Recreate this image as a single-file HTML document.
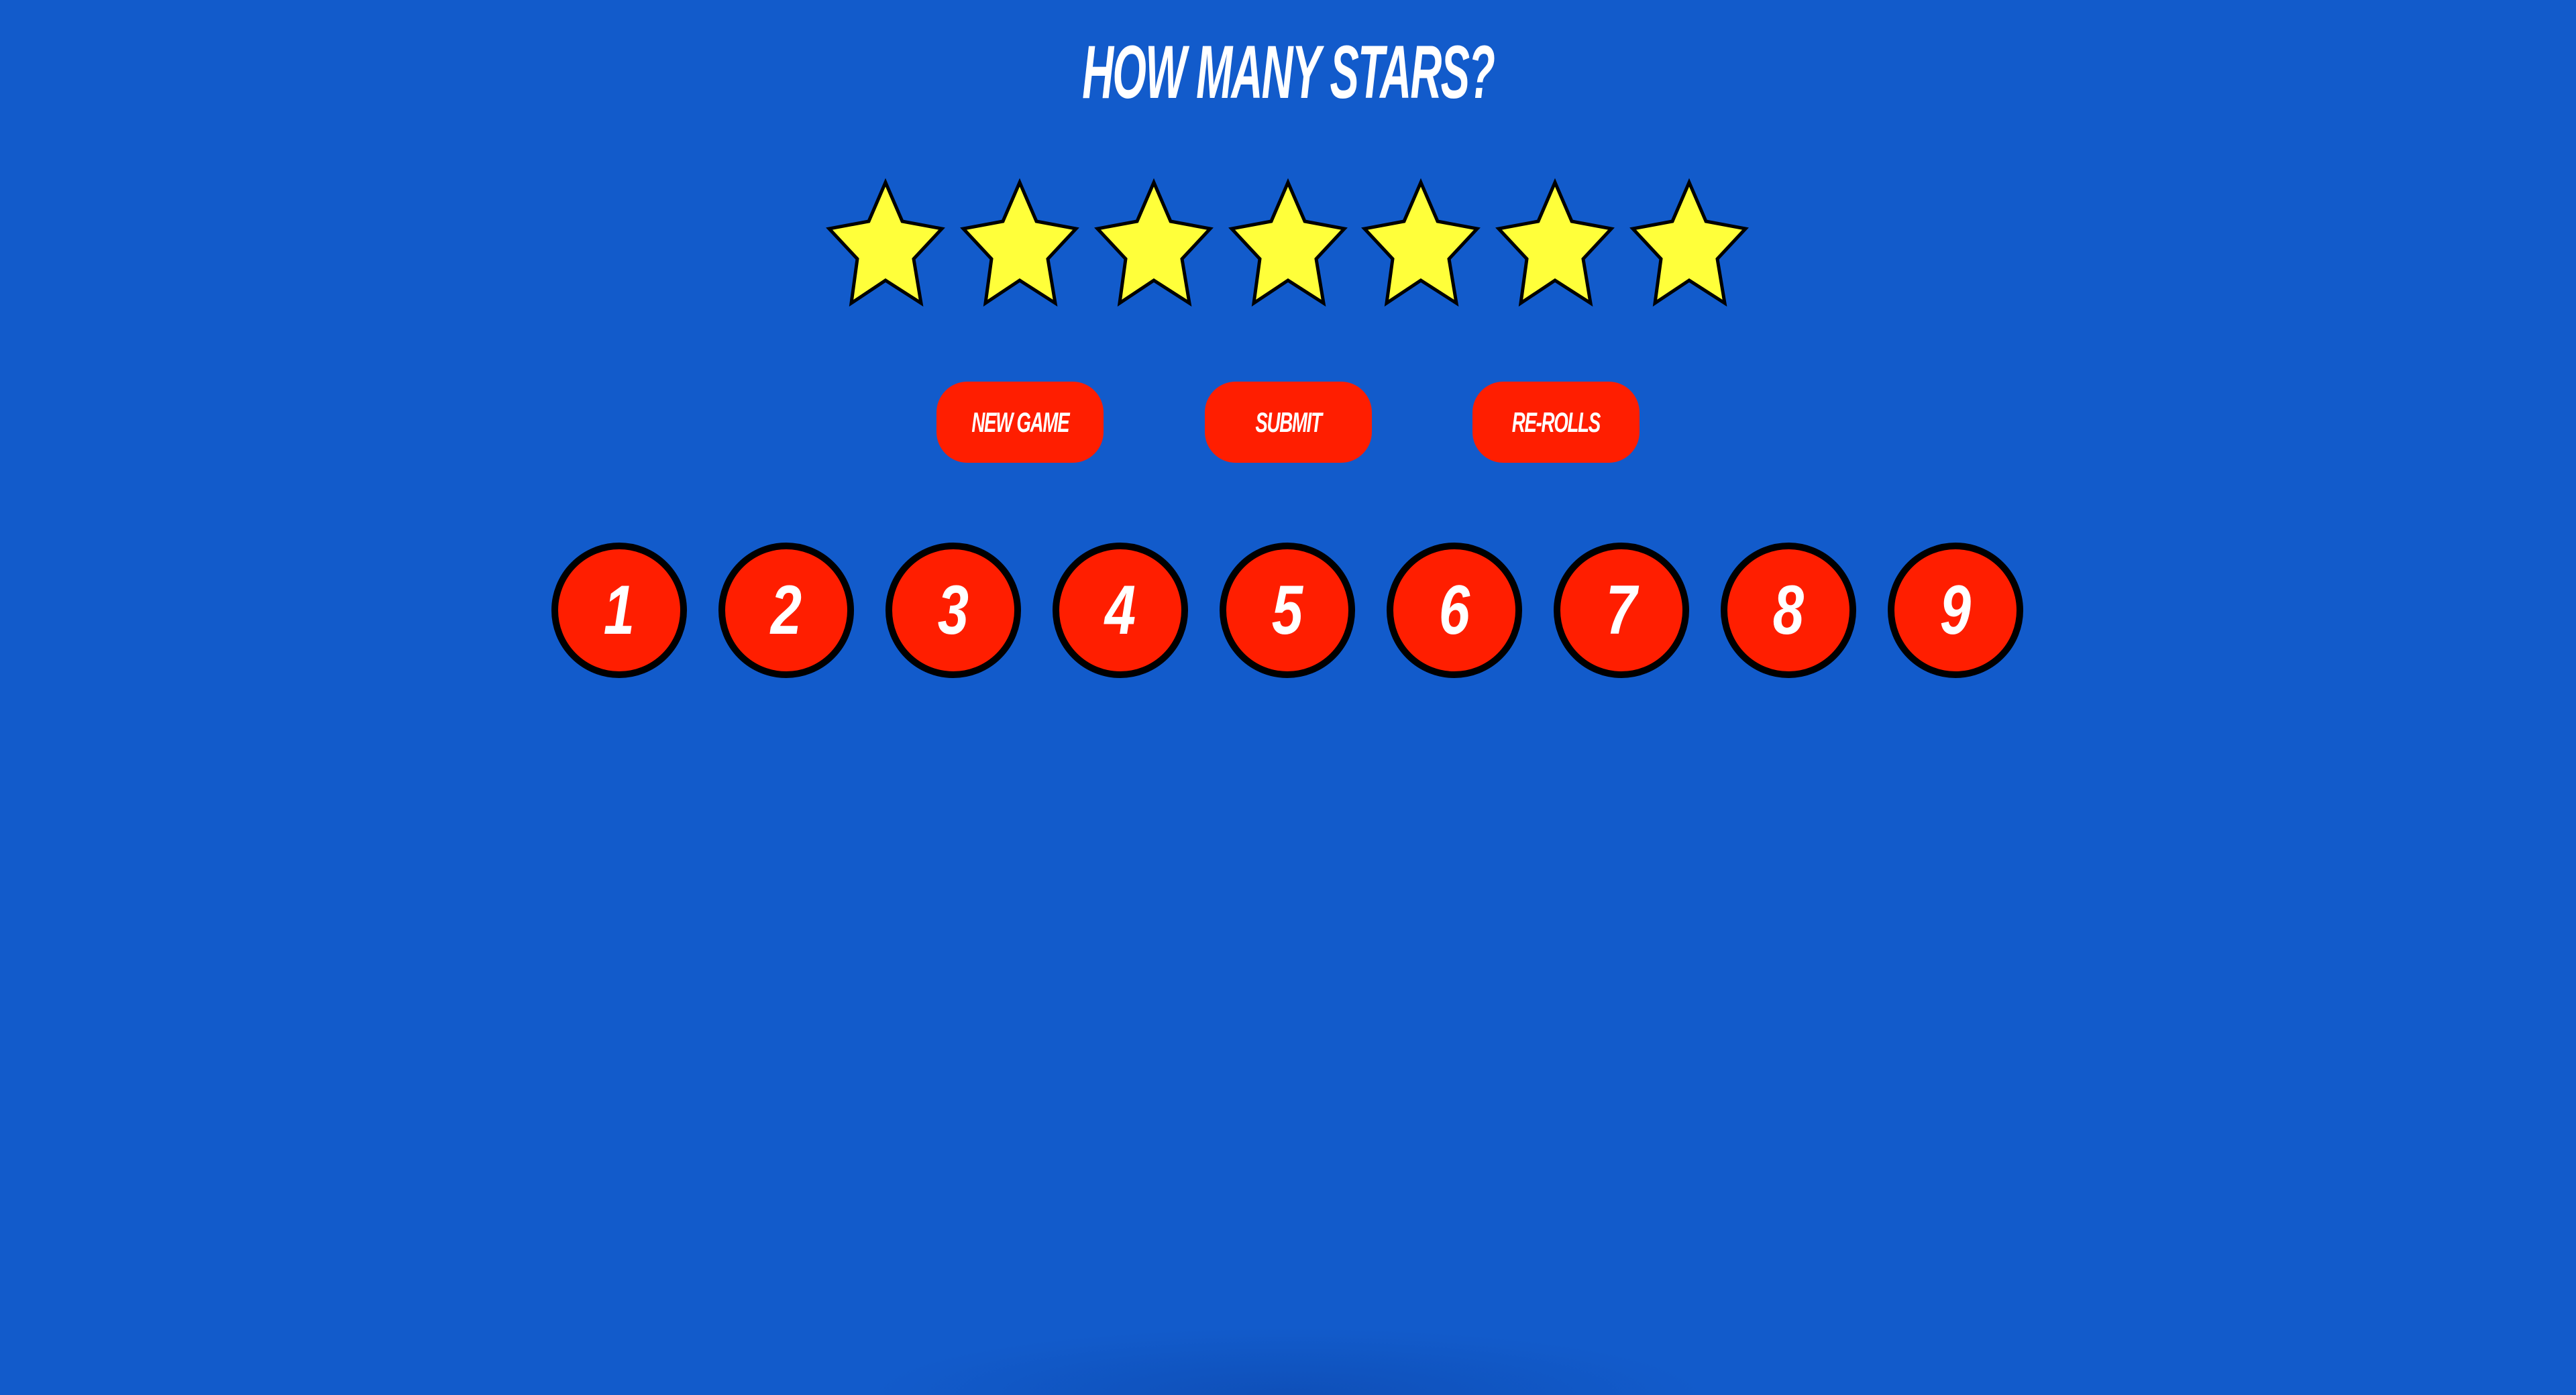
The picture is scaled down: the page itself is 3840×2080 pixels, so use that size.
<!DOCTYPE html>
<html style="overflow:hidden;height:2080px"><head><meta charset="utf-8"><style>
html,body{margin:0;padding:0}
body{width:3840px;height:2080px;background:#125bcb;position:relative;overflow:hidden;font-family:"Liberation Sans Narrow","Liberation Sans",sans-serif}
.shade{position:absolute;left:1300px;top:1980px;width:1240px;height:100px;background:radial-gradient(ellipse 50% 100% at 50% 100%,rgba(12,70,170,0.55),rgba(18,91,203,0))}
.title{position:absolute;left:0;width:3840px;top:50px;text-align:center;color:#fff;font-weight:bold;font-style:italic;font-size:112px;line-height:116px}
.title span{display:inline-block;transform:scaleX(0.58);letter-spacing:-3px}
.btn{position:absolute;top:569px;width:249px;height:121px;background:#ff1e00;border-radius:46px;color:#fff;font-weight:bold;font-style:italic;font-size:42px;text-align:center;line-height:121px}
.btn span{display:inline-block;transform:scaleX(0.66);letter-spacing:-2px}
.c{position:absolute;top:809px;width:182px;height:182px;border:10px solid #000;border-radius:50%;background:#ff1e00;color:#fff;font-weight:bold;font-style:italic;font-size:104px;line-height:182px;text-align:center}
.c span{display:inline-block;transform:scaleX(0.8)}
</style></head><body>
<div class="shade"></div>
<div class="title"><span>HOW MANY STARS?</span></div>

<svg width="3840" height="500" style="position:absolute;left:0;top:0">
<defs><polygon id="s" points="84,0 109,58 168,69 126,114 137,180 84,146 33,180 42,114 0,69 59,58" fill="#ffff3a" stroke="#000" stroke-width="5" stroke-linejoin="miter"/></defs>
<use href="#s" x="1236" y="272"/>
<use href="#s" x="1436" y="272"/>
<use href="#s" x="1636" y="272"/>
<use href="#s" x="1836" y="272"/>
<use href="#s" x="2034" y="272"/>
<use href="#s" x="2234" y="272"/>
<use href="#s" x="2434" y="272"/>
</svg>

<div class="btn" style="left:1396px"><span>NEW GAME</span></div>
<div class="btn" style="left:1796px"><span>SUBMIT</span></div>
<div class="btn" style="left:2195px"><span>RE-ROLLS</span></div>

<div class="c" style="left:822px"><span>1</span></div>
<div class="c" style="left:1071px"><span>2</span></div>
<div class="c" style="left:1320px"><span>3</span></div>
<div class="c" style="left:1569px"><span>4</span></div>
<div class="c" style="left:1818px"><span>5</span></div>
<div class="c" style="left:2067px"><span>6</span></div>
<div class="c" style="left:2316px"><span>7</span></div>
<div class="c" style="left:2565px"><span>8</span></div>
<div class="c" style="left:2814px"><span>9</span></div>
</body></html>
